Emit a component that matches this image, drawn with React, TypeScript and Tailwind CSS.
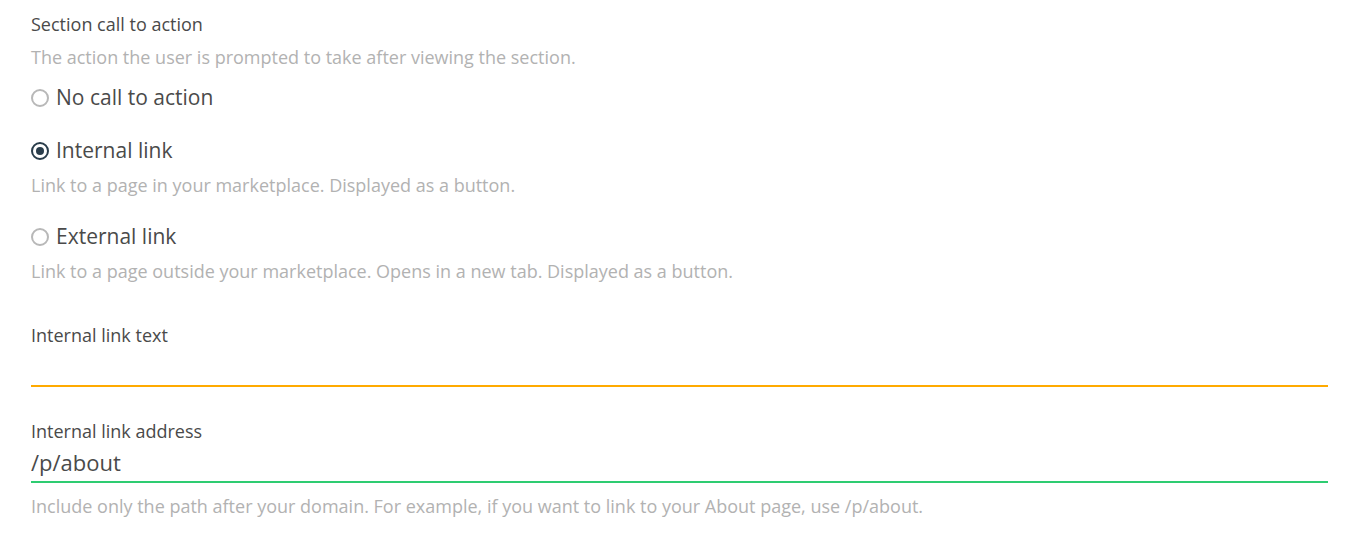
import React, { useState } from 'react';

type Option = {
    value: string;
    label: string;
    help?: string;
};

const options: Option[] = [
    { value: 'none', label: 'No call to action' },
    { value: 'internal', label: 'Internal link', help: 'Link to a page in your marketplace. Displayed as a button.' },
    { value: 'external', label: 'External link', help: 'Link to a page outside your marketplace. Opens in a new tab. Displayed as a button.' },
];

const Radio: React.FC<{ checked: boolean }> = ({ checked }) => (
    <span
        className={
            checked
                ? 'w-[18px] h-[18px] rounded-full border-2 border-[#2a3d4b] flex items-center justify-center shrink-0'
                : 'w-[18px] h-[18px] rounded-full border-2 border-[#b8b8b8] flex items-center justify-center shrink-0'
        }
    >
        {checked && <span className="w-[8px] h-[8px] rounded-full bg-[#2a3d4b]" />}
    </span>
);

export default function App() {
    const [selected, setSelected] = useState('internal');
    const [text, setText] = useState('');
    const [href, setHref] = useState('/p/about');

    return (
        <div className="min-h-screen bg-white pl-[31px] pr-[34px] pt-[12px] font-['Open_Sans',sans-serif] text-[#4a4a4a]">
            <fieldset>
                <legend className="text-[18px] leading-[24px]">Section call to action</legend>
                <p className="mt-[9px] text-[18px] leading-[24px] text-[#b2b2b2]">
                    The action the user is prompted to take after viewing the section.
                </p>

                <div className="mt-[13px] flex flex-col">
                    {options.map((o) => (
                        <div key={o.value} className={o.help ? 'mb-[24px]' : 'mb-[21px]'}>
                            <label
                                className="flex items-center gap-[7px] h-[32px] cursor-pointer text-[21px]"
                                onClick={() => setSelected(o.value)}
                            >
                                <Radio checked={selected === o.value} />
                                <span>{o.label}</span>
                            </label>
                            {o.help && (
                                <p className="mt-[6px] text-[18px] leading-[24px] text-[#b2b2b2]">{o.help}</p>
                            )}
                        </div>
                    ))}
                </div>
            </fieldset>

            <div className="mt-[16px]">
                <label className="block text-[18px] leading-[24px]">Internal link text</label>
                <input
                    value={text}
                    onChange={(e) => setText(e.target.value)}
                    className="block w-full h-[40px] border-b-2 border-[#ffaa00] outline-none text-[22px] bg-transparent"
                />
            </div>

            <div className="mt-[32px]">
                <label className="block text-[18px] leading-[24px]">Internal link address</label>
                <input
                    value={href}
                    onChange={(e) => setHref(e.target.value)}
                    className="block w-full h-[40px] border-b-2 border-[#2ecc71] outline-none text-[22px] bg-transparent"
                />
                <p className="mt-[11px] text-[18px] leading-[24px] text-[#b2b2b2]">
                    Include only the path after your domain. For example, if you want to link to your About page, use /p/about.
                </p>
            </div>
        </div>
    );
}
